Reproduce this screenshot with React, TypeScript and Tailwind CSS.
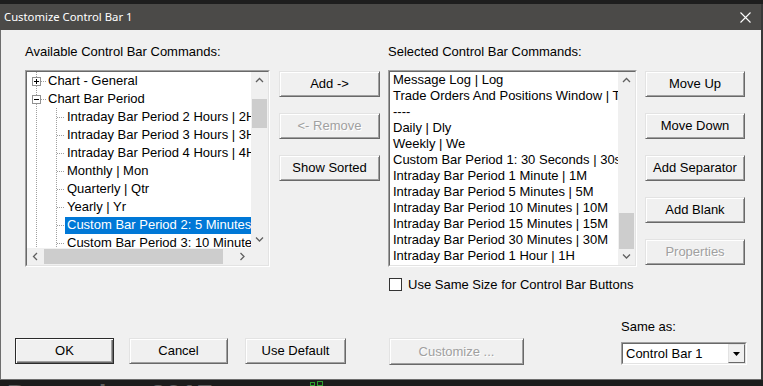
import React from 'react';

// Classic Win32 dialog: "Customize Control Bar 1"

const treeRows: { label: string; parent?: boolean; open?: boolean; selected?: boolean }[] = [
  { label: 'Chart - General', parent: true },
  { label: 'Chart Bar Period', parent: true, open: true },
  { label: 'Intraday Bar Period 2 Hours | 2H' },
  { label: 'Intraday Bar Period 3 Hours | 3H' },
  { label: 'Intraday Bar Period 4 Hours | 4H' },
  { label: 'Monthly | Mon' },
  { label: 'Quarterly | Qtr' },
  { label: 'Yearly | Yr' },
  { label: 'Custom Bar Period 2: 5 Minutes | 5M', selected: true },
  { label: 'Custom Bar Period 3: 10 Minutes | 10M' },
];

const selectedRows = [
  'Message Log | Log',
  'Trade Orders And Positions Window | TOP',
  '----',
  'Daily | Dly',
  'Weekly | We',
  'Custom Bar Period 1: 30 Seconds | 30s',
  'Intraday Bar Period 1 Minute | 1M',
  'Intraday Bar Period 5 Minutes | 5M',
  'Intraday Bar Period 10 Minutes | 10M',
  'Intraday Bar Period 15 Minutes | 15M',
  'Intraday Bar Period 30 Minutes | 30M',
  'Intraday Bar Period 1 Hour | 1H',
];

function Btn({ children, disabled, isDefault, className }: { children: React.ReactNode; disabled?: boolean; isDefault?: boolean; className?: string }) {
  const frame = isDefault
    ? 'border border-[#2b2b2b] shadow-[inset_1px_1px_0_#ffffff,inset_-1px_-1px_0_#696969,inset_-2px_-2px_0_#a0a0a0]'
    : 'border border-t-[#e3e3e3] border-l-[#e3e3e3] border-r-[#696969] border-b-[#696969] shadow-[inset_1px_1px_0_#ffffff,inset_-1px_-1px_0_#a0a0a0]';
  return (
    <div className={`flex items-center justify-center bg-[#f0f0f0] ${frame} ${className ?? ''}`}>
      <span className={disabled ? 'text-[#a0a0a0] [text-shadow:1px_1px_0_#ffffff]' : 'text-black'}>{children}</span>
    </div>
  );
}

function Chevron({ dir }: { dir: 'up' | 'down' | 'left' | 'right' }) {
  const pts = {
    up: '1,5 4.5,1.5 8,5',
    down: '1,1.5 4.5,5 8,1.5',
    left: '5,1 1.5,4.5 5,8',
    right: '1.5,1 5,4.5 1.5,8',
  }[dir];
  const size = dir === 'up' || dir === 'down' ? { w: 9, h: 7 } : { w: 7, h: 9 };
  return (
    <svg width={size.w} height={size.h} viewBox={`0 0 ${size.w} ${size.h}`}>
      <polyline points={pts} fill="none" stroke="#606060" strokeWidth="1.3" />
    </svg>
  );
}

function VScroll({ thumbTop, thumbHeight }: { thumbTop: number; thumbHeight: number }) {
  return (
    <div className="flex w-[17px] flex-col bg-[#f0f0f0]">
      <div className="flex h-[17px] items-center justify-center"><Chevron dir="up" /></div>
      <div className="flex-1">
        <div className="mx-px bg-[#cdcdcd]" style={{ marginTop: thumbTop, height: thumbHeight }} />
      </div>
      <div className="flex h-[17px] items-center justify-center"><Chevron dir="down" /></div>
    </div>
  );
}

function Sunken({ children, className }: { children: React.ReactNode; className?: string }) {
  return (
    <div className={`border border-t-[#a0a0a0] border-l-[#a0a0a0] border-r-white border-b-white ${className ?? ''}`}>
      <div className="flex h-full w-full flex-col border border-t-[#696969] border-l-[#696969] border-r-[#e3e3e3] border-b-[#e3e3e3] bg-white">
        {children}
      </div>
    </div>
  );
}

function ExpandBox({ open }: { open?: boolean }) {
  return (
    <div className="relative flex h-[9px] w-[9px] items-center justify-center border border-[#919191] bg-white">
      <div className="h-px w-[5px] bg-black" />
      {!open && <div className="absolute left-[3px] top-[1px] h-[5px] w-px bg-black" />}
    </div>
  );
}

function TreeList() {
  return (
    <Sunken className="h-[197px] w-[245px]">
      <div className="flex min-h-0 flex-1">
        <div className="relative flex-1 overflow-hidden">
          <svg className="pointer-events-none absolute left-0 top-0" width="224" height="176">
            <g stroke="#a0a0a0" strokeWidth="1" strokeDasharray="1 1">
              <line x1="9.5" y1="0" x2="9.5" y2="176" />
              <line x1="14" y1="9.5" x2="20" y2="9.5" />
              <line x1="14" y1="27.5" x2="20" y2="27.5" />
              <line x1="29.5" y1="36" x2="29.5" y2="176" />
              {[2, 3, 4, 5, 6, 7, 8, 9].map((i) => (
                <line key={i} x1="30" y1={9.5 + 18 * i} x2="37" y2={9.5 + 18 * i} />
              ))}
            </g>
          </svg>
          <div className="relative flex flex-col">
            {treeRows.map((r) =>
              r.parent ? (
                <div key={r.label} className="flex h-[18px] items-center pl-[5px]">
                  <ExpandBox open={r.open} />
                  <span className="ml-[7px] whitespace-nowrap">{r.label}</span>
                </div>
              ) : (
                <div key={r.label} className="flex h-[18px] items-center pl-[38px]">
                  <span
                    className={
                      r.selected
                        ? 'flex h-[17px] flex-1 items-center overflow-hidden whitespace-nowrap bg-[#0078d7] px-[2px] text-white'
                        : 'flex h-[17px] flex-1 items-center overflow-hidden whitespace-nowrap px-[2px]'
                    }
                  >
                    {r.label}
                  </span>
                </div>
              ),
            )}
          </div>
        </div>
        <VScroll thumbTop={10} thumbHeight={29} />
      </div>
      <div className="flex h-[17px] bg-[#f0f0f0]">
        <div className="flex w-[17px] items-center justify-center"><Chevron dir="left" /></div>
        <div className="flex-1 py-px">
          <div className="h-full w-[179px] bg-[#cdcdcd]" />
        </div>
        <div className="flex w-[17px] items-center justify-center"><Chevron dir="right" /></div>
        <div className="w-[17px]" />
      </div>
    </Sunken>
  );
}

function SelectedList() {
  return (
    <Sunken className="h-[197px] w-[249px]">
      <div className="flex min-h-0 flex-1">
        <div className="flex flex-1 flex-col overflow-hidden pl-[3px]">
          {selectedRows.map((t, i) => (
            <div key={i} className="h-[16px] whitespace-nowrap leading-[16px]">{t}</div>
          ))}
        </div>
        <VScroll thumbTop={124} thumbHeight={36} />
      </div>
    </Sunken>
  );
}

export default function App() {
  return (
    <div className="h-[386px] w-[763px] overflow-hidden bg-[#1c1c1c] font-['Liberation_Sans',Arial,sans-serif] text-[13px] text-black">
      <div className="h-[4px] bg-[#1e1e1e]" />
      <div className="flex flex-col border-r-2 border-[#383838]">
        {/* Title bar */}
        <div className="flex h-[26px] items-center justify-between bg-[#4b4a48] pl-[4px] pr-[10px]">
          <span className="font-['Noto_Sans',sans-serif] text-[11.3px] text-white">Customize Control Bar 1</span>
          <svg width="11" height="11" viewBox="0 0 11 11">
            <path d="M0.5 0.5 L10.5 10.5 M10.5 0.5 L0.5 10.5" stroke="#ffffff" strokeWidth="1.1" />
          </svg>
        </div>

        {/* Client area */}
        <div className="h-[350px] border-b border-l border-[#6e6e6e] bg-[#f0f0f0]">
          <div className="flex pl-[24px] pt-[14px] leading-[15px]">
            <div className="w-[363px]">Available Control Bar Commands:</div>
            <div>Selected Control Bar Commands:</div>
          </div>

          <div className="mt-[11px] flex items-start pl-[24px]">
            <TreeList />
            <div className="ml-[9px] flex w-[101px] flex-col gap-[16px] pt-px">
              <Btn className="h-[26px]">Add -&gt;</Btn>
              <Btn className="h-[26px]" disabled>&lt;- Remove</Btn>
              <Btn className="h-[26px]">Show Sorted</Btn>
            </div>
            <div className="ml-[8px] flex w-[249px] flex-col">
              <SelectedList />
              <div className="mt-[11px] flex h-[13px] items-center">
                <div className="ml-px h-[13px] w-[13px] border border-[#333333] bg-white" />
                <span className="ml-[6px] whitespace-nowrap leading-[13px]">Use Same Size for Control Bar Buttons</span>
              </div>
            </div>
            <div className="ml-[8px] flex w-[100px] flex-col gap-[16px] pt-px">
              <Btn className="h-[26px]">Move Up</Btn>
              <Btn className="h-[26px]">Move Down</Btn>
              <Btn className="h-[26px]">Add Separator</Btn>
              <Btn className="h-[26px]">Add Blank</Btn>
              <Btn className="h-[26px]" disabled>Properties</Btn>
            </div>
          </div>

          <div className="mt-[28px] flex items-start pl-[14px]">
            <Btn isDefault className="mt-[19px] h-[26px] w-[99px]">OK</Btn>
            <Btn className="ml-[15px] mt-[19px] h-[26px] w-[99px]">Cancel</Btn>
            <Btn className="ml-[17px] mt-[19px] h-[26px] w-[101px]">Use Default</Btn>
            <Btn className="ml-[43px] mt-[19px] h-[27px] w-[135px]" disabled>Customize ...</Btn>
            <div className="ml-[97px] flex flex-col">
              <div className="leading-[15px]">Same as:</div>
              <div className="mt-[8px] flex h-[23px] w-[126px] border border-t-[#a0a0a0] border-l-[#a0a0a0] border-r-white border-b-white">
                <div className="flex flex-1 border border-t-[#696969] border-l-[#696969] border-r-[#e3e3e3] border-b-[#e3e3e3] bg-white">
                  <div className="flex flex-1 items-center pl-[3px]">Control Bar 1</div>
                  <div className="flex w-[17px] items-center justify-center border border-t-[#e3e3e3] border-l-[#e3e3e3] border-r-[#696969] border-b-[#696969] bg-[#f0f0f0]">
                    <svg width="7" height="4" viewBox="0 0 7 4">
                      <polygon points="0,0 7,0 3.5,4" fill="#000000" />
                    </svg>
                  </div>
                </div>
              </div>
            </div>
          </div>
        </div>
      </div>

      {/* Chart behind the dialog */}
      <div className="flex h-[6px] items-start overflow-hidden bg-[#1c1c1c] pl-[7px]">
        <div className="mt-[1px] whitespace-nowrap text-[28px] font-bold leading-none text-[#5e5e5e]">December 2017</div>
        <div className="ml-[98px] mt-[2px] h-[4px] w-[5px] border border-[#2fa02f]" />
        <div className="ml-[2px] mt-[1px] h-[5px] w-[6px] border border-[#2fa02f]" />
      </div>
    </div>
  );
}
